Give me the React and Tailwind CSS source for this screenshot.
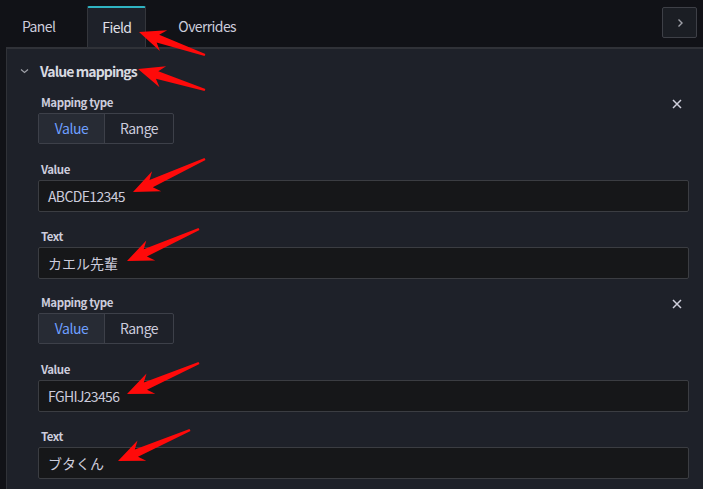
import React from 'react';

const FONT = '"Noto Sans CJK JP", "Noto Sans", sans-serif';

const arrows = [
  { t: [139, 32], e: [205, 55] },
  { t: [138, 69], e: [205, 90] },
  { t: [133, 192], e: [205, 159] },
  { t: [127, 261], e: [199, 229] },
  { t: [127, 394], e: [199, 363] },
  { t: [118, 461], e: [190, 430] },
];

// skitch-like arrow: tip, barbs, tapering shaft to the tail
const arrowPoints = ({ t, e }) => {
  const dx = e[0] - t[0];
  const dy = e[1] - t[1];
  const L = Math.hypot(dx, dy);
  const ux = dx / L;
  const uy = dy / L;
  const nx = -uy;
  const ny = ux;
  const h = 26;
  const w = 11;
  const s0 = 4;
  const s1 = 1.2;
  const p = (a, b) => [t[0] + ux * a + nx * b, t[1] + uy * a + ny * b];
  const pts = [
    t,
    p(h, w),
    p(h - 6, s0),
    [e[0] + nx * s1, e[1] + ny * s1],
    [e[0] - nx * s1, e[1] - ny * s1],
    p(h - 6, -s0),
    p(h, -w),
  ];
  return pts.map((q) => q.map((v) => v.toFixed(1)).join(',')).join(' ');
};

const Label = ({ children }) => (
  <div className="h-4 leading-4 text-[11.5px] tracking-[-0.45px] font-semibold text-[#ccccdc] pl-[3px] mb-[3px]">
    {children}
  </div>
);

const Input = ({ value, cjk }) => (
  <div
    className={
      'h-[32px] flex items-center px-[9px] bg-[#161719] border border-[#3b3d42] rounded-[2px] text-[14px] text-[#ccccdc] ' +
      (cjk ? 'tracking-normal' : 'tracking-[-0.65px]')
    }
  >
    {value}
  </div>
);

const Mapping = ({ value, text }) => (
  <div className="flex flex-col">
    <div className="flex justify-between">
      <div>
        <Label>Mapping type</Label>
        <div className="flex h-[31px] border border-[#3d4049] rounded-[2px] text-[14px] tracking-[-0.5px] w-fit">
          <div className="w-[65px] flex items-center justify-center bg-[#272b34] text-[#6e9fff]">Value</div>
          <div className="w-[69px] flex items-center justify-center border-l border-[#3d4049] text-[#ccccdc]">Range</div>
        </div>
      </div>
      <div className="w-4 h-4 mt-[2px] mr-[4px] flex items-center justify-center">
        <svg width="10" height="10" viewBox="0 0 10 10">
          <path d="M1 1L9 9M9 1L1 9" stroke="#d0d0dc" strokeWidth="1.5" />
        </svg>
      </div>
    </div>
    <div className="mt-[17px]">
      <Label>Value</Label>
      <Input value={value} />
    </div>
    <div className="mt-4">
      <Label>Text</Label>
      <Input value={text} cjk />
    </div>
  </div>
);

export default function App() {
  return (
    <div className="relative w-[703px] h-[489px] overflow-hidden bg-[#111217]" style={{ fontFamily: FONT }}>
      {/* tab bar */}
      <div className="h-[47px] flex items-end justify-between pl-[7px] pr-[6px]">
        <div className="flex gap-[17px] text-[14px] tracking-[-0.6px]">
          <div className="h-[41px] px-[15px] flex items-center text-[#ccccdc]">Panel</div>
          <div className="relative h-[41px] w-[59px] flex items-center justify-center text-[#e0e0e8] bg-[#1e2129] border-x border-[#34363c] border-t-2 border-t-[#2fb3c2] rounded-t-[2px] mb-[-1px] z-10">
            Field
          </div>
          <div className="h-[41px] px-[15px] flex items-center text-[#ccccdc]">Overrides</div>
        </div>
        <div className="mb-[9px] w-[35px] h-[31px] flex items-center justify-center border border-[#3e4047] rounded-[2px] bg-[#1b1e24]">
          <svg width="8" height="10" viewBox="0 0 8 10">
            <path d="M2.5 1.5L6 5L2.5 8.5" stroke="#9fa1a8" strokeWidth="1.4" fill="none" />
          </svg>
        </div>
      </div>

      {/* options panel */}
      <div className="ml-[6px] h-[442px] bg-[#1e2129] border-l border-t-2 border-[#303238]">
        <div className="h-[43px] flex items-center pt-[1px]">
          <div className="w-[33px] flex justify-center pl-[2px]">
            <svg width="9" height="6" viewBox="0 0 9 6">
              <path d="M1 1.5L4.5 4.5L8 1.5" stroke="#9fa1a8" strokeWidth="1.2" fill="none" />
            </svg>
          </div>
          <span className="text-[14px] font-bold tracking-[-0.9px] text-[#d8d9e0]">Value mappings</span>
        </div>
        <div className="pl-[31px] pr-[14px] pt-[2px] flex flex-col gap-[15px]">
          <Mapping value="ABCDE12345" text="カエル先輩" />
          <Mapping value="FGHIJ23456" text="ブタくん" />
        </div>
      </div>

      {/* red annotation arrows */}
      <svg className="absolute inset-0 pointer-events-none z-20" width="703" height="489">
        {arrows.map((a, i) => (
          <polygon key={i} points={arrowPoints(a)} fill="#ff0a0a" />
        ))}
      </svg>
    </div>
  );
}
